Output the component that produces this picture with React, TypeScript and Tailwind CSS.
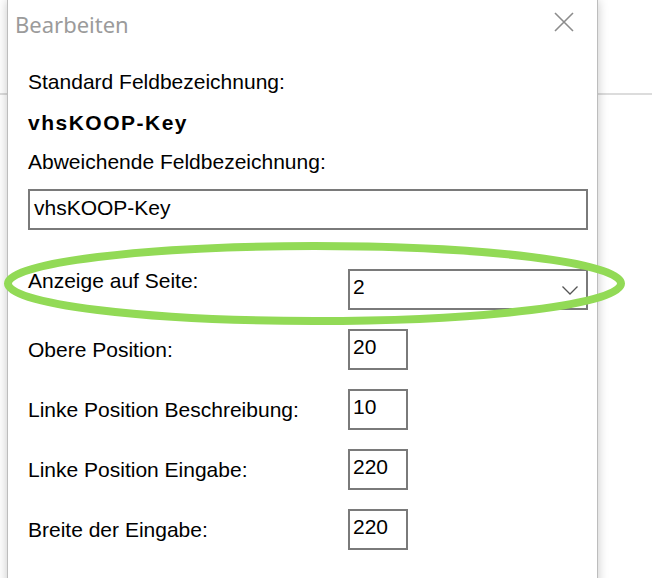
import React from 'react';

const rows = [
  { label: 'Obere Position:', value: '20' },
  { label: 'Linke Position Beschreibung:', value: '10' },
  { label: 'Linke Position Eingabe:', value: '220' },
  { label: 'Breite der Eingabe:', value: '220' },
];

const App: React.FC = () => {
  return (
    <div
      className="relative h-[578px] w-[652px] overflow-hidden bg-white text-black"
      style={{ fontFamily: '"Liberation Sans", Arial, sans-serif' }}
    >
      {/* line of the window behind */}
      <div className="absolute left-0 right-0 top-[93px] h-[2px] bg-[#dcdcdc]" />

      <div className="relative ml-[7px] h-[600px] w-[591px] border-x border-[#bdbdbd] bg-white shadow-[0_0_10px_rgba(0,0,0,0.22)]">
        <div className="flex items-start justify-between pl-[7px] pr-[23px] pt-[9px]">
          <div
            className="h-[30px] text-[22px] leading-[30px] text-[#9b9b9b]"
            style={{ fontFamily: '"Noto Sans", "Open Sans", sans-serif' }}
          >
            Bearbeiten
          </div>
          <svg width="20" height="20" viewBox="0 0 20 20" className="mt-[3px]">
            <path d="M1 1 L19 19 M19 1 L1 19" stroke="#8c8c8c" strokeWidth="1.6" fill="none" />
          </svg>
        </div>

        <div className="flex flex-col pl-[20px] text-[21px] leading-[24px]">
          <div className="mt-[31px]">Standard Feldbezeichnung:</div>
          <div className="mt-[17px] font-bold tracking-[1.5px]">vhsKOOP-Key</div>
          <div className="mt-[15px]">Abweichende Feldbezeichnung:</div>
          <div className="mt-[15px] h-[41px] w-[560px] border-2 border-[#7a7a7a] pl-[4px] pt-[5px]">vhsKOOP-Key</div>

          <div className="mt-[39px] flex h-[41px]">
            <div className="w-[320px]">Anzeige auf Seite:</div>
            <div className="flex h-[41px] w-[240px] items-start justify-between border-2 border-[#7a7a7a] pl-[3px] pr-[8px] pt-[4px]">
              <span>2</span>
              <svg width="16" height="9" viewBox="0 0 16 9" className="mt-[11px]">
                <path d="M0.5 0.5 L8 8 L15.5 0.5" stroke="#555" strokeWidth="1.3" fill="none" />
              </svg>
            </div>
          </div>

          {rows.map(r => (
            <div key={r.label} className="mt-[19px] flex h-[41px] items-center">
              <div className="w-[320px]">{r.label}</div>
              <div className="h-[41px] w-[60px] border-2 border-[#7a7a7a] pl-[3px] pt-[4px]">{r.value}</div>
            </div>
          ))}
        </div>
      </div>

      {/* green marker ellipse drawn over the dialog */}
      <svg className="pointer-events-none absolute left-0 top-0" width="652" height="578">
        <ellipse cx="314.5" cy="283.5" rx="306.5" ry="37.5" fill="none" stroke="#92da56" strokeWidth="8" />
      </svg>
    </div>
  );
};

export default App;
